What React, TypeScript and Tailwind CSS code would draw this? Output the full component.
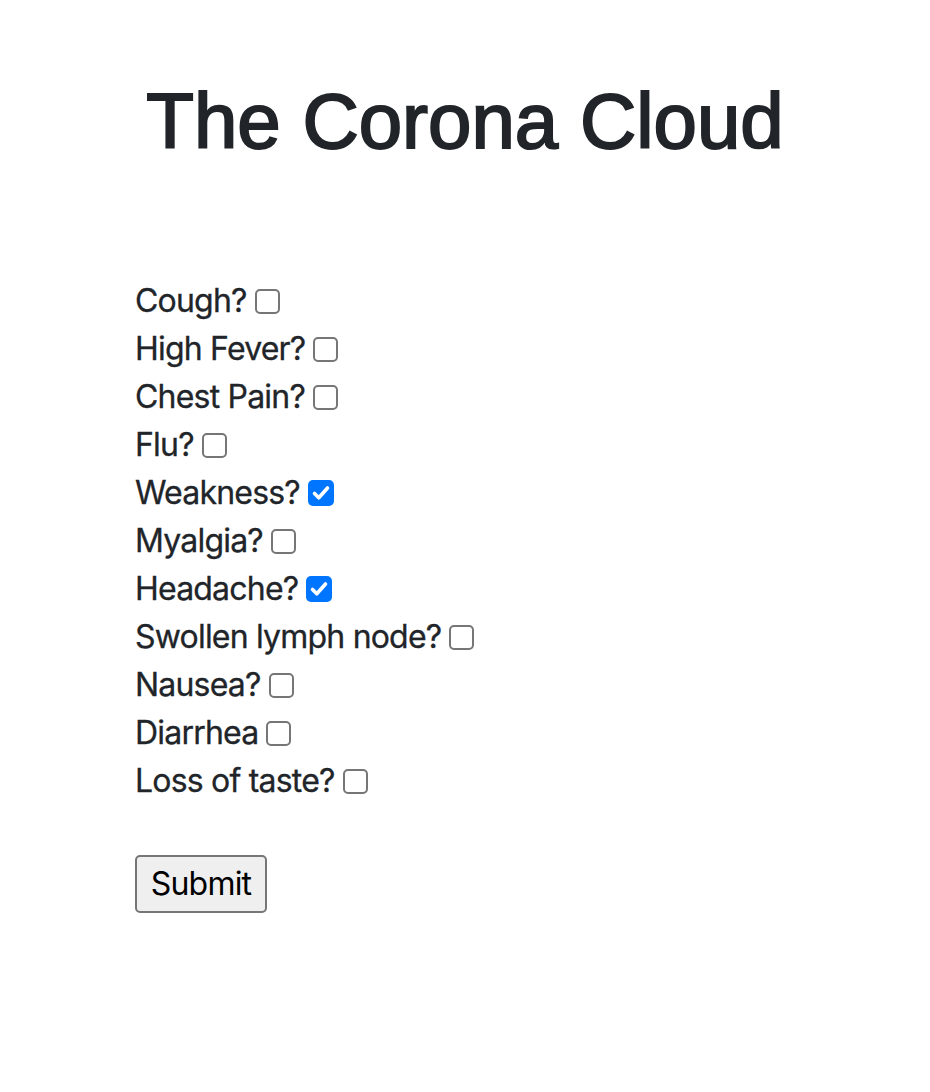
const symptoms: { label: string; checked?: boolean }[] = [
  { label: 'Cough?' },
  { label: 'High Fever?' },
  { label: 'Chest Pain?' },
  { label: 'Flu?' },
  { label: 'Weakness?', checked: true },
  { label: 'Myalgia?' },
  { label: 'Headache?', checked: true },
  { label: 'Swollen lymph node?' },
  { label: 'Nausea?' },
  { label: 'Diarrhea' },
  { label: 'Loss of taste?' },
];

function Box({ checked }: { checked?: boolean }) {
  if (checked) {
    return (
      <span className="ml-[8px] flex h-[26px] w-[26px] items-center justify-center rounded-[5px] bg-[#0075ff]">
        <svg viewBox="0 0 26 26" className="h-[26px] w-[26px]">
          <path d="M6.5 13.5 10.8 17.8 19.5 8" fill="none" stroke="white" strokeWidth="3.6" strokeLinecap="round" strokeLinejoin="round" />
        </svg>
      </span>
    );
  }
  return <span className="ml-[8px] block h-[25px] w-[25px] rounded-[5px] border-2 border-[#767676] bg-white" />;
}

export default function App() {
  return (
    <div className="min-h-[1092px] w-[930px] bg-white text-[#212529]">
      <h1 className="pt-[73px] text-center font-['Liberation_Sans',Arial,sans-serif] text-[78px] leading-[96px] [-webkit-text-stroke:2px_#212529]">
        The Corona Cloud
      </h1>
      <form className="mt-[108px] pl-[135px] font-['Inter',sans-serif] text-[32px] leading-[48px] tracking-[-0.8px] [-webkit-text-stroke:0.3px_#212529]">
        {symptoms.map((s) => (
          <div key={s.label} className="flex h-[48px] items-center">
            <span>{s.label}</span>
            <Box checked={s.checked} />
          </div>
        ))}
        <button
          type="button"
          className="mt-[50px] h-[58px] w-[132px] rounded-[5px] border-2 border-[#767676] bg-[#efefef] text-[32px] leading-none text-black [-webkit-text-stroke:0px]"
        >
          Submit
        </button>
      </form>
    </div>
  );
}
